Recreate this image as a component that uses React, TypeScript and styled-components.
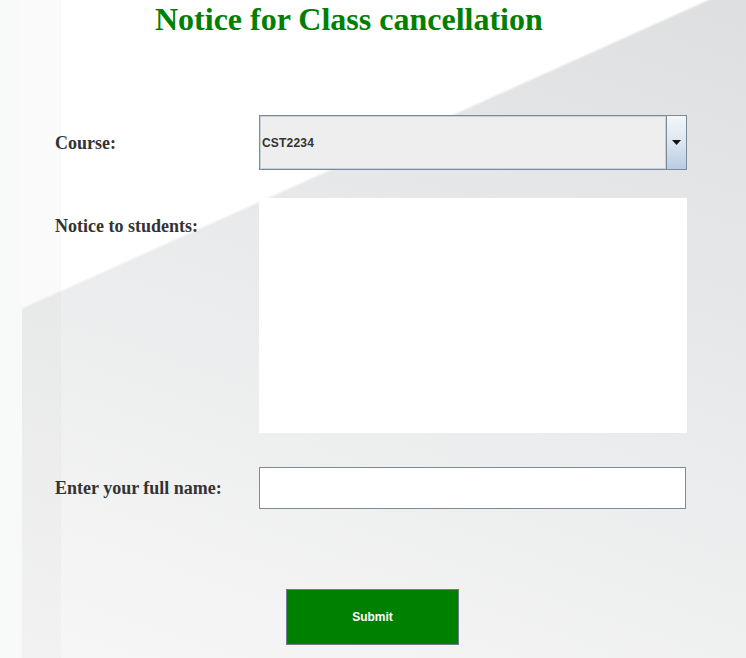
import React from "react";
import styled, { createGlobalStyle } from "styled-components";

const GlobalStyle = createGlobalStyle`
  html, body {
    margin: 0;
    padding: 0;
    background: #ffffff;
  }
  * { box-sizing: border-box; }
`;

const Page = styled.div`
  width: 746px;
  min-height: 658px;
  padding-top: 1px;
  font-family: "Liberation Serif", "Times New Roman", serif;
  background:
    linear-gradient(to right, #f8f9f9 0, #f8f9f9 22px, transparent 22px),
    linear-gradient(to right, rgba(0, 0, 0, 0.02) 0, rgba(0, 0, 0, 0.02) 61px, transparent 61px),
    linear-gradient(155.8deg, #ffffff 0, #ffffff 289px, rgba(255, 255, 255, 0) 292px),
    linear-gradient(199.5deg, #dedfe0 0%, #e9eaeb 45%, #f7f7f7 100%);
`;

const Title = styled.h1`
  margin: 0;
  padding-left: 155px;
  font-family: "Liberation Serif", "Times New Roman", serif;
  font-weight: bold;
  font-size: 32px;
  line-height: 36px;
  color: #008000;
`;

const Form = styled.div`
  display: flex;
  flex-direction: column;
  padding-left: 55px;
  margin-top: 78px;
`;

const Row = styled.div<{ $top: number; $align: "center" | "start" }>`
  display: grid;
  grid-template-columns: 204px 428px;
  align-items: ${(p) => p.$align};
  margin-top: ${(p) => p.$top}px;
`;

const Label = styled.label<{ $pad?: number }>`
  font-family: "Liberation Serif", "Times New Roman", serif;
  font-weight: bold;
  font-size: 18px;
  line-height: 20px;
  color: #333333;
  padding-top: ${(p) => p.$pad ?? 0}px;
`;

const Combo = styled.div`
  display: flex;
  height: 55px;
  border: 1px solid #7a8a99;
  background: #eeeeee;
`;

const ComboValue = styled.div`
  flex: 1;
  display: flex;
  align-items: center;
  padding-left: 2px;
  font-family: "Liberation Sans", Arial, sans-serif;
  font-weight: bold;
  font-size: 12px;
  letter-spacing: 0.2px;
  color: #333333;
  background: #eeeeee;
  box-shadow: inset 0 0 0 1px #c4d2e0;
  border-right: 1px solid #7a8a99;
`;

const ArrowButton = styled.div`
  width: 19px;
  display: flex;
  align-items: center;
  justify-content: center;
  background: linear-gradient(#f3f6fa 0%, #dfe8f2 45%, #b8cce2 100%);
`;

const TextArea = styled.textarea`
  display: block;
  width: 428px;
  height: 235px;
  border: none;
  outline: none;
  resize: none;
  background: #ffffff;
  margin: 0;
  padding: 2px;
`;

const NameInput = styled.input`
  display: block;
  width: 427px;
  height: 42px;
  border: 1px solid #7a8a99;
  background: #ffffff;
  outline: none;
  margin: 0;
  padding: 0 4px;
`;

const ButtonRow = styled.div`
  display: flex;
  justify-content: center;
  margin-top: 80px;
  padding-right: 1px;
`;

const SubmitButton = styled.button`
  width: 173px;
  height: 56px;
  background: #008000;
  border: 1px solid #6e7e8e;
  color: #ffffff;
  font-family: "Liberation Sans", Arial, sans-serif;
  font-weight: bold;
  font-size: 12px;
  padding: 0;
  cursor: pointer;
`;

export default function App() {
  return (
    <>
      <GlobalStyle />
      <Page>
        <Title>Notice for Class cancellation</Title>
        <Form>
          <Row $top={0} $align="center">
            <Label>Course:</Label>
            <Combo>
              <ComboValue>CST2234</ComboValue>
              <ArrowButton>
                <svg width="9" height="5" viewBox="0 0 9 5">
                  <polygon points="0,0 9,0 4.5,5" fill="#111111" />
                </svg>
              </ArrowButton>
            </Combo>
          </Row>
          <Row $top={28} $align="start">
            <Label $pad={18}>Notice to students:</Label>
            <TextArea />
          </Row>
          <Row $top={34} $align="center">
            <Label>Enter your full name:</Label>
            <NameInput type="text" />
          </Row>
        </Form>
        <ButtonRow>
          <SubmitButton type="button">Submit</SubmitButton>
        </ButtonRow>
      </Page>
    </>
  );
}
